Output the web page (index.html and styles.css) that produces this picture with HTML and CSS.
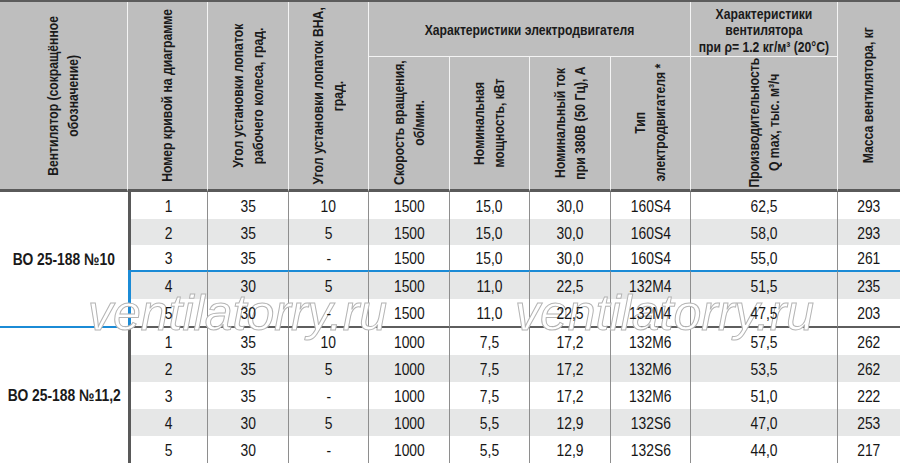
FILE: index.html
```html
<!DOCTYPE html>
<html lang="ru">
<head>
<meta charset="utf-8">
<title>ВО 25-188</title>
<link rel="stylesheet" href="styles.css">
</head>
<body>
<div class="wrap">
  <div class="grid">
    <div class="h rs2"><div class="vt">Вентилятор (сокращённое<br>обозначение)</div></div>
    <div class="h rs2"><div class="vt">Номер кривой на диаграмме</div></div>
    <div class="h rs2"><div class="vt">Угол установки лопаток<br>рабочего колеса, град.</div></div>
    <div class="h rs2"><div class="vt">Угол установки лопаток ВНА,<br>град.</div></div>
    <div class="h top cs4"><span class="ht">Характеристики электродвигателя</span></div>
    <div class="h top"><span class="ht">Характеристики<br>вентилятора<br>при ρ= 1.2 кг/м³ (20°С)</span></div>
    <div class="h rs2 last"><div class="vt">Масса вентилятора, кг</div></div>
    <div class="h sub"><div class="vt">Скорость вращения,<br>об/мин.</div></div>
    <div class="h sub"><div class="vt">Номинальная<br>мощность, кВт</div></div>
    <div class="h sub"><div class="vt">Номинальный ток<br>при 380В (50 Гц), А</div></div>
    <div class="h sub"><div class="vt">Тип<br>электродвигателя *</div></div>
    <div class="h sub"><div class="vt">Производительность<br>Q max, тыс. м³/ч</div></div>

    <div class="name g1"><span class="nt">ВО 25-188 №10</span></div>
    <div class="row"><div class="c first"><span>1</span></div><div class="c"><span>35</span></div><div class="c"><span>10</span></div><div class="c"><span>1500</span></div><div class="c"><span>15,0</span></div><div class="c"><span>30,0</span></div><div class="c"><span>160S4</span></div><div class="c"><span>62,5</span></div><div class="c end"><span>293</span></div></div>
    <div class="row alt"><div class="c first"><span>2</span></div><div class="c"><span>35</span></div><div class="c"><span>5</span></div><div class="c"><span>1500</span></div><div class="c"><span>15,0</span></div><div class="c"><span>30,0</span></div><div class="c"><span>160S4</span></div><div class="c"><span>58,0</span></div><div class="c end"><span>293</span></div></div>
    <div class="row"><div class="c first"><span>3</span></div><div class="c"><span>35</span></div><div class="c"><span>-</span></div><div class="c"><span>1500</span></div><div class="c"><span>15,0</span></div><div class="c"><span>30,0</span></div><div class="c"><span>160S4</span></div><div class="c"><span>55,0</span></div><div class="c end"><span>261</span></div></div>
    <div class="row alt mark-top"><div class="c first"><span>4</span></div><div class="c"><span>30</span></div><div class="c"><span>5</span></div><div class="c"><span>1500</span></div><div class="c"><span>11,0</span></div><div class="c"><span>22,5</span></div><div class="c"><span>132M4</span></div><div class="c"><span>51,5</span></div><div class="c end"><span>235</span></div></div>
    <div class="row mark-bottom"><div class="c first"><span>5</span></div><div class="c"><span>30</span></div><div class="c"><span>-</span></div><div class="c"><span>1500</span></div><div class="c"><span>11,0</span></div><div class="c"><span>22,5</span></div><div class="c"><span>132M4</span></div><div class="c"><span>47,5</span></div><div class="c end"><span>203</span></div></div>

    <div class="name"><span class="nt">ВО 25-188 №11,2</span></div>
    <div class="row"><div class="c first"><span>1</span></div><div class="c"><span>35</span></div><div class="c"><span>10</span></div><div class="c"><span>1000</span></div><div class="c"><span>7,5</span></div><div class="c"><span>17,2</span></div><div class="c"><span>132M6</span></div><div class="c"><span>57,5</span></div><div class="c end"><span>262</span></div></div>
    <div class="row alt"><div class="c first"><span>2</span></div><div class="c"><span>35</span></div><div class="c"><span>5</span></div><div class="c"><span>1000</span></div><div class="c"><span>7,5</span></div><div class="c"><span>17,2</span></div><div class="c"><span>132M6</span></div><div class="c"><span>53,5</span></div><div class="c end"><span>262</span></div></div>
    <div class="row"><div class="c first"><span>3</span></div><div class="c"><span>35</span></div><div class="c"><span>-</span></div><div class="c"><span>1000</span></div><div class="c"><span>7,5</span></div><div class="c"><span>17,2</span></div><div class="c"><span>132M6</span></div><div class="c"><span>51,0</span></div><div class="c end"><span>222</span></div></div>
    <div class="row alt"><div class="c first"><span>4</span></div><div class="c"><span>30</span></div><div class="c"><span>5</span></div><div class="c"><span>1000</span></div><div class="c"><span>5,5</span></div><div class="c"><span>12,9</span></div><div class="c"><span>132S6</span></div><div class="c"><span>47,0</span></div><div class="c end"><span>253</span></div></div>
    <div class="row"><div class="c first"><span>5</span></div><div class="c"><span>30</span></div><div class="c"><span>-</span></div><div class="c"><span>1000</span></div><div class="c"><span>5,5</span></div><div class="c"><span>12,9</span></div><div class="c"><span>132S6</span></div><div class="c"><span>44,0</span></div><div class="c end"><span>217</span></div></div>
  </div>
  <div class="wm wm1">ventilatorry.ru</div>
  <div class="wm wm2">ventilatorry.ru</div>
</div>
</body>
</html>
```
FILE: styles.css
```css
html, body {
  margin: 0;
  padding: 0;
  background: #ffffff;
}
body {
  width: 900px;
  height: 463px;
  overflow: hidden;
  font-family: "Liberation Sans", Arial, sans-serif;
  color: #1c1c1c;
}
.wrap {
  position: relative;
  width: 900px;
}
.grid {
  display: grid;
  grid-template-columns: 128px 80px 81px 80px 81px 80px 81px 80px 147px 62px;
  grid-template-rows: 55px 135px 27px 26px 25px 29px 29px 27px 27px 27px 27px 27px;
  border-top: 2px solid #5c5c5c;
}
.grid > div, .row > div {
  box-sizing: border-box;
}
.row {
  display: contents;
}
.h {
  background: #bebebe;
  border-right: 1px solid #f4f4f4;
  font-weight: bold;
  font-size: 14px;
  line-height: 16.5px;
  color: #1a1a1a;
  display: flex;
  align-items: center;
  justify-content: center;
  text-align: center;
}
.h.last {
  border-right: none;
}
.rs2 {
  grid-row: span 2;
  border-bottom: 3px solid #5a5a5a;
}
.cs4 {
  grid-column: span 4;
}
.top {
  border-bottom: 1px solid #f4f4f4;
  padding-top: 3px;
}
.sub {
  border-bottom: 3px solid #5a5a5a;
}
.ht {
  display: inline-block;
  white-space: nowrap;
  transform: scaleX(0.87);
  flex-shrink: 0;
}
.vt {
  writing-mode: vertical-rl;
  transform: rotate(180deg) scaleY(0.87);
  text-align: center;
  white-space: nowrap;
  line-height: 19.5px;
  flex-shrink: 0;
}
.name {
  grid-row: span 5;
  display: flex;
  align-items: center;
  justify-content: center;
  font-weight: bold;
  font-size: 16.5px;
  color: #1a1a1a;
  background: #ffffff;
}
.nt {
  display: inline-block;
  white-space: nowrap;
  transform: scaleX(0.84);
  flex-shrink: 0;
}
.name.g1 {
  border-bottom: 2px solid #1b8bd6;
}
.c {
  display: flex;
  align-items: center;
  justify-content: center;
  padding-top: 2px;
  font-size: 16.5px;
  color: #161616;
  background: #ffffff;
  border-right: 1px solid #8e8e8e;
}
.c > span {
  display: inline-block;
  position: relative;
  z-index: 2;
  white-space: nowrap;
  transform: scaleX(0.84);
}
.c.end {
  border-right: none;
}
.c.first {
  border-left: 3px solid #595959;
}
.row.alt > .c {
  background: #e6e7e7;
}
.row.mark-top > .c {
  border-top: 2px solid #1b8bd6;
}
.row.mark-top > .c.first,
.row.mark-bottom > .c.first {
  border-left-color: #1b8bd6;
}
.row.mark-bottom > .c {
  border-bottom: 2px solid #5e5e5e;
}
.wm {
  position: absolute;
  z-index: 1;
  top: 289px;
  font-family: "Liberation Sans", sans-serif;
  font-style: italic;
  font-size: 50px;
  line-height: 48px;
  color: #ffffff;
  -webkit-text-stroke: 1px #b4b4b4;
  white-space: nowrap;
  pointer-events: none;
}
.wm1 {
  left: 88px;
}
.wm2 {
  left: 515px;
}
```
